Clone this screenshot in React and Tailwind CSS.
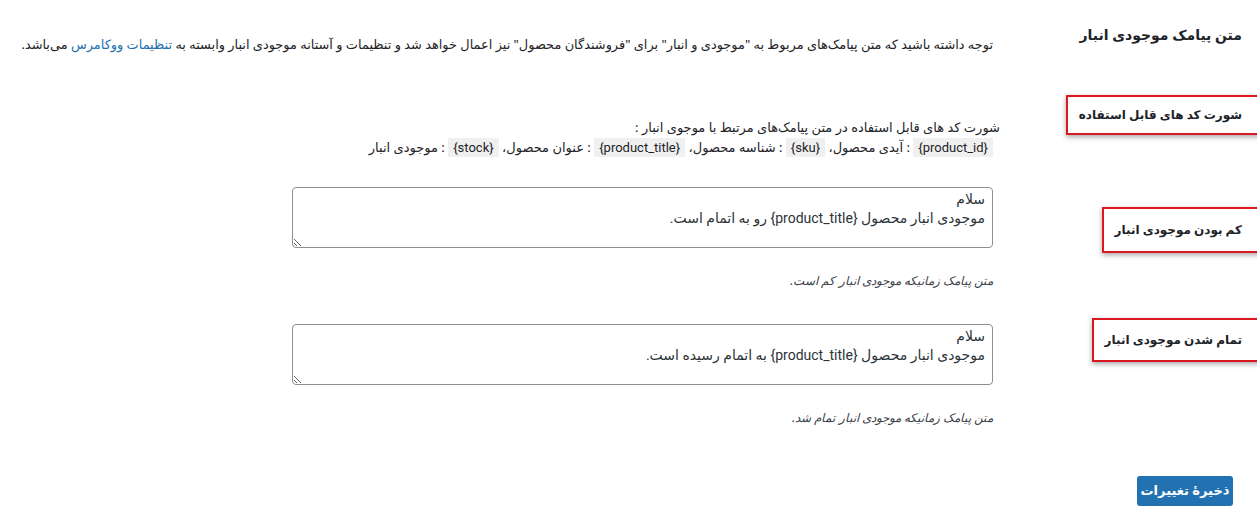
import React from "react";

const font = "font-['Noto_Sans','DejaVu_Sans',sans-serif]";

// red framed label on the right-hand column, running off the page edge
const LabelBox = ({ children, className = "" }) => (
  <div
    className={`border-2 border-[#d9191f] bg-white shadow-[0_2px_5px_rgba(0,0,0,0.35)] -ml-[10px] pr-[23px] pl-[11px] flex items-center whitespace-nowrap text-[12px] font-bold text-[#1d2327] ${className}`}
  >
    {children}
  </div>
);

const Code = ({ children }) => (
  <code className="bg-[#f0f0f1] px-[5px] py-[2px] text-[13px] font-['Roboto',sans-serif]">{children}</code>
);

const SmsField = ({ label, boxClass, boxTop, areaTop, value, hint }) => (
  <div className="flex">
    <div className="w-[264px] shrink-0 flex justify-start">
      <div style={{ marginTop: boxTop }} className="-mr-[10px]">
        <LabelBox className={boxClass}>{label}</LabelBox>
      </div>
    </div>
    <div className="flex-1">
      <textarea
        defaultValue={value}
        style={{ marginTop: areaTop }}
        className="block w-[701px] h-[61px] border border-[#8c8f94] rounded-[4px] px-[7px] py-[2px] text-[14px] leading-[19px] text-[#2c3338] font-['Roboto','DejaVu_Sans',sans-serif]"
      />
      <p className="mt-[24px] text-[12px] leading-[18px] italic text-[#3c434a]">{hint}</p>
    </div>
  </div>
);

export default function App() {
  return (
    <div dir="rtl" className={`relative w-[1257px] h-[522px] overflow-hidden bg-white text-[#1d2327] ${font}`}>
      {/* section heading + notice */}
      <div className="flex h-[95px]">
        <div className="w-[264px] shrink-0 pr-[15px] pt-[25px]">
          <h2 className="text-[14px] leading-[20px] font-bold whitespace-nowrap">متن پیامک موجودی انبار</h2>
        </div>
        <p className="flex-1 pt-[34px] text-[12.9px] leading-[20px] whitespace-nowrap">
          توجه داشته باشید که متن پیامک‌های مربوط به "موجودی و انبار" برای "فروشندگان محصول" نیز اعمال خواهد شد و تنظیمات و آستانه موجودی انبار وابسته به{" "}
          <a href="#" className="text-[#2271b1]">تنظیمات ووکامرس</a> می‌باشد.
        </p>
      </div>

      {/* available shortcodes */}
      <div className="flex h-[92px]">
        <div className="w-[264px] shrink-0 flex justify-start">
          <div className="-mr-[10px]">
            <LabelBox className="h-[40px]">شورت کد های قابل استفاده</LabelBox>
          </div>
        </div>
        <div className="flex-1 pt-[23px] text-[13px] leading-[19px]">
          <div className="-mr-[7px]">شورت کد های قابل استفاده در متن پیامک‌های مرتبط با موجوی انبار :</div>
          <div className="mt-[1px]">
            <Code>{"{product_id}"}</Code> : آیدی محصول، <Code>{"{sku}"}</Code> : شناسه محصول، <Code>{"{product_title}"}</Code> : عنوان محصول، <Code>{"{stock}"}</Code> : موجودی انبار
          </div>
        </div>
      </div>

      <div className="h-[131px]">
        <SmsField
          label="کم بودن موجودی انبار"
          boxClass="h-[46px]"
          boxTop={20}
          areaTop={0}
          value={"سلام\nموجودی انبار محصول {product_title} رو به اتمام است."}
          hint="متن پیامک زمانیکه موجودی انبار کم است."
        />
      </div>

      <div className="h-[158px]">
        <SmsField
          label="تمام شدن موجودی انبار"
          boxClass="h-[44px]"
          boxTop={0}
          areaTop={6}
          value={"سلام\nموجودی انبار محصول {product_title} به اتمام رسیده است."}
          hint="متن پیامک زمانیکه موجودی انبار تمام شد."
        />
      </div>

      <div className="pr-[24px]">
        <button className="w-[96px] h-[30px] rounded-[3px] bg-[#2271b1] text-white text-[13px] font-bold">
          ذخیرهٔ تغییرات
        </button>
      </div>
    </div>
  );
}
